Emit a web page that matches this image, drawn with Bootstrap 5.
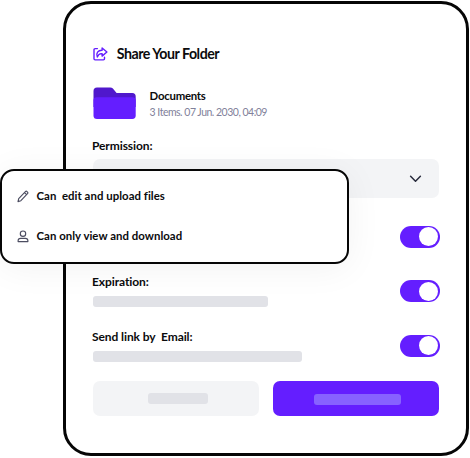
<!DOCTYPE html>
<html lang="en">
<head>
<meta charset="utf-8">
<meta name="viewport" content="width=device-width, initial-scale=1">
<title>Share Your Folder</title>
<link href="https://cdn.jsdelivr.net/npm/bootstrap@5.3.0/dist/css/bootstrap.min.css" rel="stylesheet">
<style>
body{font-family:Lato,"Open Sans",sans-serif;color:#0b0b0d;background:#fff;width:470px;height:458px;overflow:hidden}
.share-panel{width:406px;height:455px;margin:1px 0 0 63px;border:3px solid #060606;border-radius:28px;padding:40px 27px 0 26px}
.line{white-space:pre;font-weight:700;font-size:12px;line-height:16px}
.panel-title{font-size:14.2px;line-height:20px;letter-spacing:-.48px;margin-left:9px}
.head-row{height:20px;padding-left:.7px}
.folder-row{height:36px;margin-top:20px}
.folder-art{margin:2.5px 0 0 .6px}
.folder-text{padding:4px 0 0 13px}
.doc-name{font-size:11.4px;letter-spacing:-.25px}
.meta{font-weight:400;font-size:10.5px;letter-spacing:-.5px;color:#81819a}
.permission{margin-top:18px;letter-spacing:-.1px}
.select-box{height:39px;background:#f3f4f6;border-radius:7px;padding-right:17px;margin:5px 0 0 .5px}
.settings{margin:11.5px -1px 0 0}
.setting{height:54.6px}
.setting-text{margin-top:-1.2px}
.expiration,.email{margin-bottom:6px;letter-spacing:-.08px}
.toggle{width:40px;height:22px;border-radius:11px;background:#641eff;padding-right:2px}
.knob{width:19px;height:19px}
.ghost{height:11px;border-radius:3px;background:#e1e2e7;margin-left:.5px}
.ghost-one{width:175px}
.ghost-two{width:209px}
.actions{margin:8px 0 0 .5px;gap:13.5px}
.btn.action{width:166.5px;height:34.5px;border-radius:7px;border:0;padding:0}
.quiet{background:#f3f4f6!important}
.primary{background:#641eff!important}
.quiet .ghost{width:60px;margin-left:4px}
.primary .ghost{width:87px;background:#8762ff;margin:1px 0 0 3px}
.menu{left:0;top:169px;width:349px;height:94.5px;border:2.7px solid #060606;border-radius:14px;background:#fff;box-shadow:0 4px 36px rgba(0,0,0,.055);padding:17px 0 0 15px}
.choice{height:39.5px;gap:7.5px}
.choice svg{margin-top:2px}
.choice .line{font-size:11.4px;letter-spacing:.04px}
</style>
</head>
<body class="position-relative">
<main class="share-panel d-flex flex-column">
  <header class="head-row d-flex align-items-center">
    <svg width="15" height="14" viewBox="0 0 15 14" fill="none" stroke="#641eff" stroke-width="1.4" stroke-linejoin="round" stroke-linecap="round"><path d="M4.4 1.6H2.1Q1 1.6 1 2.7v9.1q0 1.1 1.1 1.1h8.3q1.1 0 1.1-1.1V10.3"/><path d="M9.1 1l4.8 4-4.8 4.1V6.7C6.8 6.4 5.3 7.4 4.3 10.1 2.6 5.9 5.1 3.2 9.1 3.3Z"/></svg>
    <h1 class="line panel-title mb-0">Share Your Folder</h1>
  </header>
  <section class="folder-row d-flex">
    <svg class="folder-art flex-shrink-0" width="44" height="33" viewBox="0 0 44 33"><path d="M.5 4Q.5.5 4 .5h13.2q1.7 0 2.7 1.1l3.7 4.3h15.7q3.4 0 3.4 3.5V20H.5Z" fill="#5018cc"/><path d="M.5 13.5q0-3.3 3.3-3.3h35.6q3.3 0 3.3 3.3v15.1q0 3.4-3.4 3.4H4Q.5 32 .5 28.5Z" fill="#641eff"/></svg>
    <div class="folder-text">
      <div class="line doc-name">Documents</div>
      <div class="line meta">3 Items. 07 Jun. 2030, 04:09</div>
    </div>
  </section>
  <div class="line permission">Permission:</div>
  <div class="select-box d-flex align-items-center justify-content-end">
    <svg width="13" height="8" viewBox="0 0 13 8" fill="none" stroke="#282b3c" stroke-width="1.5" stroke-linecap="round" stroke-linejoin="round"><path d="M1.6 1.3 6.5 6.2l4.9-4.9"/></svg>
  </div>
  <section class="settings">
    <div class="setting d-flex align-items-center justify-content-end"><span class="toggle d-flex align-items-center justify-content-end"><i class="knob bg-white rounded-circle"></i></span></div>
    <div class="setting d-flex align-items-center justify-content-between"><div class="setting-text"><div class="line expiration">Expiration:</div><div class="ghost ghost-one"></div></div><span class="toggle d-flex align-items-center justify-content-end"><i class="knob bg-white rounded-circle"></i></span></div>
    <div class="setting d-flex align-items-center justify-content-between"><div class="setting-text"><div class="line email">Send link by  Email:</div><div class="ghost ghost-two"></div></div><span class="toggle d-flex align-items-center justify-content-end"><i class="knob bg-white rounded-circle"></i></span></div>
  </section>
  <footer class="actions d-flex">
    <button class="btn action quiet d-flex align-items-center justify-content-center" aria-label="Cancel"><span class="ghost"></span></button>
    <button class="btn action primary d-flex align-items-center justify-content-center" aria-label="Share"><span class="ghost"></span></button>
  </footer>
</main>
<div class="menu position-absolute">
  <div class="choice d-flex"><svg width="12" height="13" viewBox="0 0 12 13" fill="none" stroke="#4c4d61" stroke-width="1.15" stroke-linejoin="round"><path d="M1 11.6 1.7 8.6 8.4 1.6q.8-.8 1.6 0l.5.5q.8.8 0 1.6L3.9 10.7ZM7.5 2.6l2 2"/></svg><span class="line">Can  edit and upload files</span></div>
  <div class="choice d-flex"><svg width="12" height="13" viewBox="0 0 12 13" fill="none" stroke="#4c4d61" stroke-width="1.15" stroke-linejoin="round"><circle cx="6" cy="3.7" r="2.7"/><path d="M1.1 11.6v-.9q0-2.4 2.5-2.4h4.8q2.5 0 2.5 2.4v.9Z"/></svg><span class="line">Can only view and download</span></div>
</div>
<script src="https://cdn.jsdelivr.net/npm/bootstrap@5.3.0/dist/js/bootstrap.bundle.min.js"></script>
</body>
</html>
